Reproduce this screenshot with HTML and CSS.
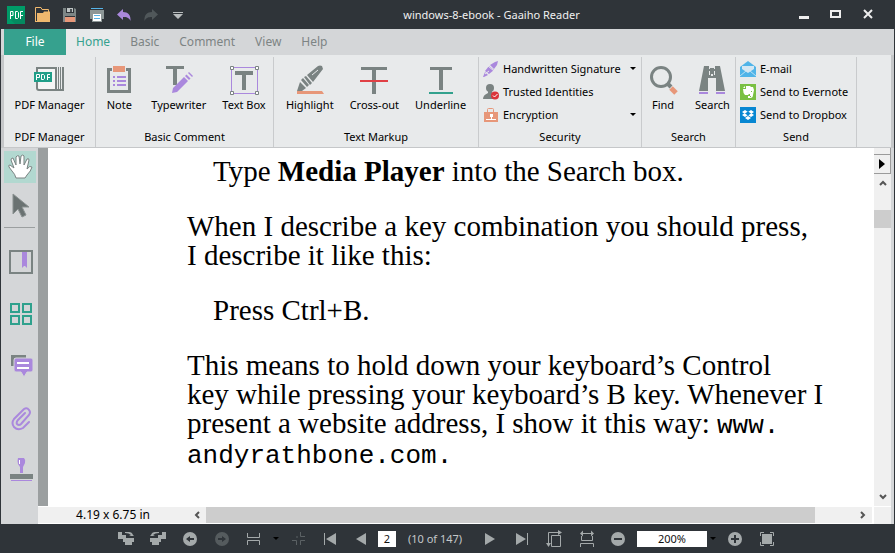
FILE: index.html
```html
<!DOCTYPE html>
<html lang="en">
<head>
<meta charset="utf-8">
<title>windows-8-ebook - Gaaiho Reader</title>
<link rel="stylesheet" href="styles.css">
</head>
<body>
<div class="app">
  <header class="titlebar">
    <div class="quick">
      <button class="tool" aria-label="Application menu"><svg width="20" height="18" viewBox="0 0 20 18"><path fill="#009b68" d="M1 0h18v18H1z"/><path fill="#048a60" d="M19 9v9H9l-4-4z"/><path fill="none" stroke="#fff" d="M4.500 13V5.500h2.500v4H5M9.500 5.500h2l1 1v5l-1 1h-2zM14.500 13V5.500H17M15 9.500h2"/></svg></button>
      <button class="tool" aria-label="Open"><svg width="16" height="16" viewBox="0 0 16 16"><path fill="none" stroke="#f0b86e" d="M.5 15V.5H6l1 2h6.500V5"/><path fill="#f0b86e" d="M2 6h6l1-1.500h6V15H2zM0 14h15v1H0z"/></svg></button>
      <button class="tool" aria-label="Save"><svg width="16" height="16" viewBox="0 0 16 16"><path fill="#7d8686" d="M1 1h3v5h8V1l2 1v13h-1V9H3v6H1z"/><path fill="#bfc5c5" d="M5 1h6v4H5z"/><path fill="#4b5154" d="M8 2h2v3H8z"/><path fill="#e79779" d="M3 10h10v5H3z"/></svg></button>
      <button class="tool" aria-label="Print"><svg width="16" height="16" viewBox="0 0 16 16"><path fill="#56b4e8" d="M2 1h12v1H2z"/><path fill="#8d9797" d="M1 3h14v9h-2v3H3v-3H1z"/><path fill="#fff" d="M4 7h8v7H4z"/><path fill="#56b4e8" d="M5 8h6v1H5zm0 3h6v1H5z"/></svg></button>
      <button class="tool" aria-label="Undo"><svg width="14" height="12" viewBox="0 0 14 12"><path fill="#aa88dd" d="M0 5.500 6 0v3c5 0 8 3 7.500 9C12 8.500 9.500 8 6 8v3z"/></svg></button>
      <button class="tool" aria-label="Redo"><svg width="14" height="12" viewBox="0 0 14 12"><path fill="#50575a" d="M14 5.500 8 0v3C3 3 0 6 .5 12 2 8.500 4.500 8 8 8v3z"/></svg></button>
      <button class="tool" aria-label="Customize toolbar"><svg width="10" height="8" viewBox="0 0 10 8"><path fill="#b9bdbe" d="M0 1h10v1H0zm0 2h10L5 8z"/></svg></button>
    </div>
    <h1 class="title">windows-8-ebook - Gaaiho Reader</h1>
    <div class="window-buttons">
      <button class="win" aria-label="Minimize"><svg width="12" height="12"><path fill="#eee" d="M1 7h10v3H1z"/></svg></button>
      <button class="win" aria-label="Maximize"><svg width="12" height="12"><path fill="#eee" fill-rule="evenodd" d="M0 1h11v8H0zm2 2v4h7V3z"/></svg></button>
      <button class="win" aria-label="Close"><svg width="12" height="12"><path fill="none" stroke="#eee" stroke-width="2" d="m2 1 8 8m0-8-8 8"/></svg></button>
    </div>
  </header>

  <nav class="tabs">
    <button class="tab file">File</button>
    <button class="tab active">Home</button>
    <button class="tab">Basic</button>
    <button class="tab">Comment</button>
    <button class="tab">View</button>
    <button class="tab">Help</button>
  </nav>

  <section class="ribbon">
    <div class="group">
      <div class="group-body">
        <button class="big"><svg width="32" height="30" viewBox="0 0 32 30"><path fill="#f4f5f5" stroke="#7a8382" stroke-width="2" d="M4 3h19v22H6q-2 0-2-2z"/><path fill="#7a8382" d="M25 2h1v23h-1zm2 0h1v23h-1zm2 0h2v24h-7v-2h5z"/><path fill="#1f9e88" d="M1 7h18v10H1z"/><path fill="none" stroke="#fff" d="M3.500 15V9.500H6.500v3H4M8.500 9.500h2l1 1v3l-1 1h-2zM14.500 15V9.500H17M15 12.500h2"/></svg>PDF Manager</button>
      </div>
      <h2 class="group-name">PDF Manager</h2>
    </div>
    <div class="group">
      <div class="group-body">
        <button class="big"><svg width="32" height="30" viewBox="0 0 32 30"><path fill="none" stroke="#7a8382" stroke-width="3" d="M5.500 4.500h21v22h-21z"/><path fill="#e8eaeb" d="M9 0h14v8H9z"/><path fill="#e79779" d="M10 1h12v6H10z"/><path fill="#aa88dd" d="M10 11h2v2h-2zm4 0h9v2h-9zm-4 4h2v2h-2zm4 0h9v2h-9zm-4 4h2v2h-2zm4 0h9v2h-9z"/></svg>Note</button>
        <button class="big"><svg width="32" height="30" viewBox="0 0 32 30"><path fill="#7a8382" d="M3 1h18v3h-7v16h-4V4H3z"/><path fill="#aa88dd" d="m9 28 1-5L21 12l4 4-11 11zM22 11l1.500-1.500 4 4L26 15zM25 8l1-1 4 4-1 1z"/></svg>Typewriter</button>
        <button class="big"><svg width="32" height="30" viewBox="0 0 32 30"><path fill="none" stroke="#aa88dd" d="M3.500 2.500h26v26h-26z"/><path fill="#fff" stroke="#7a8382" d="M2.500 1.500h3v3h-3zm25 0h3v3h-3zm-25 25h3v3h-3zm25 0h3v3h-3z"/><path fill="#7a8382" d="M7 6h18v4h-7v15h-4V10H7z"/></svg>Text Box</button>
      </div>
      <h2 class="group-name">Basic Comment</h2>
    </div>
    <div class="group">
      <div class="group-body">
        <button class="big"><svg width="32" height="30" viewBox="0 0 32 30"><path fill="#7a8382" d="m13 10 11-9q2-1 4 0l1 3-10 13zM10 12l2-1 6 7-2 2zM7 15l2-2 6 7-2 2z"/><path fill="#7a8382" d="m3 26 3-9 6 6-4 3z"/><path stroke="#e8eaeb" d="m18 10 6-5"/><path fill="#e79779" d="M3 26h25l2 3H3z"/></svg>Highlight</button>
        <button class="big"><svg width="32" height="30" viewBox="0 0 32 30"><path fill="#7a8382" d="M3 2h26v3H18v24h-4V5H3z"/><path fill="#e04045" d="M2 15h28v2H2z"/></svg>Cross-out</button>
        <button class="big"><svg width="32" height="30" viewBox="0 0 32 30"><path fill="#7a8382" d="M5 2h22v3h-9v20h-4V5H5z"/><path fill="#32a18d" d="M4 27h24v2H4z"/></svg>Underline</button>
      </div>
      <h2 class="group-name">Text Markup</h2>
    </div>
    <div class="group">
      <div class="group-list">
        <button class="row"><svg width="16" height="16" viewBox="0 0 16 16"><path fill="#aa88dd" d="m0 16 2-5 3 3-4 2zM2 10l4-5 5 4-5 4zM7 4l5-3 3-1-1 4-3 4z"/><path stroke="#e8eaeb" fill="none" d="m2 13 4-3M5 5l6 5"/></svg><span>Handwritten Signature</span><i class="caret"></i></button>
        <button class="row"><svg width="16" height="16" viewBox="0 0 16 16"><circle cx="7" cy="4" r="4" fill="#7a8382"/><path fill="#7a8382" d="M0 15q0-4 5-6V7h4v2q5 2 5 6z"/><circle cx="12" cy="11.500" r="4" fill="#db343b"/><path stroke="#fff" fill="none" d="m10 11.500 1.500 1.500 3-3"/></svg><span>Trusted Identities</span></button>
        <button class="row"><svg width="16" height="16" viewBox="0 0 16 16"><path fill="#e79779" d="M1 5h14v10H1z"/><path fill="none" stroke="#e79779" d="M4.500 5V2.500q0-1 1-1h4q1 0 1 1V5"/><path fill="#fff" d="M7 7h3v3H9v2H8v-2H7zM3 12h10v1H3z"/></svg><span>Encryption</span><i class="caret"></i></button>
      </div>
      <h2 class="group-name">Security</h2>
    </div>
    <div class="group">
      <div class="group-body">
        <button class="big"><svg width="32" height="30" viewBox="0 0 32 30"><circle cx="14" cy="12" r="9.500" fill="none" stroke="#7a8382" stroke-width="3"/><path stroke="#7a8382" stroke-width="4" d="m20 18 4 4"/><path stroke="#e79779" stroke-width="5" d="m24 23 5 5"/></svg>Find</button>
        <button class="big"><svg width="32" height="30" viewBox="0 0 32 30"><path fill="#7a8382" d="M8 1h5v3h1V3h4v1h1V1h5l5 25h-9V13h-8v13H3z"/><path fill="#e8eaeb" d="M13 6h1v4h-1zm5 0h1v4h-1zM15 9h2v2h-2z"/><path fill="#aa88dd" d="M3 27h9v2H3zm17 0h9v2h-9z"/></svg>Search</button>
      </div>
      <h2 class="group-name">Search</h2>
    </div>
    <div class="group">
      <div class="group-list">
        <button class="row"><svg width="16" height="16" viewBox="0 0 16 16"><path fill="#50b4e8" d="m0 6 8-6 8 6v10H0z"/><path fill="#d5e7f2" d="M2 5h12v3l-6 4-6-4z"/><path stroke="#b9dff4" fill="none" d="m0 15 6-5m10 5-6-5"/></svg><span>E-mail</span></button>
        <button class="row"><svg width="16" height="16" viewBox="0 0 16 16"><path fill="#7ac043" d="M0 0h16v16H0z"/><path fill="#fff" d="M3 5h3V2h4l1 1h2l1 3-1 5q0 3-3 3H8v-2h2v-2H9l-1 1H5Q3 9 3 5z"/><path fill="#fff" d="m3 4 2-2v2z"/><path fill="#7ac043" d="M11 7h1v1h-1zM10 12h1v1h-1z"/></svg><span>Send to Evernote</span></button>
        <button class="row"><svg width="16" height="16" viewBox="0 0 16 16"><path fill="#0787d2" d="M0 0h16v16H0z"/><path fill="#fff" d="m2 5 3-2 3 2-3 2zm6 0 3-2 3 2-3 2zM2 8l3-2 3 2-3 2zm6 0 3-2 3 2-3 2zM5 11l3-2 3 2-3 2z"/><path fill="#0787d2" d="m5 6.500 3-2 3 2-3 2z"/></svg><span>Send to Dropbox</span></button>
      </div>
      <h2 class="group-name">Send</h2>
    </div>
  </section>

  <main class="workspace">
    <aside class="sidebar">
      <button class="mode selected" aria-label="Hand tool"><svg width="26" height="26" viewBox="0 0 26 26"><path fill="#fff" stroke="#7a8382" stroke-linejoin="round" d="M9 24q-1-4-4-7l-3-4q-1-2 1-2l4 3L4 6q0-2 2-2l3 7V3q1-2 3-1l1 8 1-8q2-2 3 0v9l3-6q2-1 2 1l-2 9q3-4 5-2-1 4-5 8l-2 3z"/></svg></button>
      <button class="mode" aria-label="Select tool"><svg width="26" height="26" viewBox="0 0 26 26"><path fill="#6a7272" stroke="#8a9191" d="m6 2 16 13h-7l4 8-4 2-4-8-5 5z"/></svg></button>
      <hr class="divider">
      <button class="panel" aria-label="Bookmarks"><svg width="26" height="26" viewBox="0 0 26 26"><path fill="none" stroke="#7a8382" stroke-width="2" d="M3 2h22v22H3z"/><path fill="#aa88dd" d="M15 3h5v16l-2-2-1 0-2 2z"/></svg></button>
      <button class="panel" aria-label="Thumbnails"><svg width="26" height="26" viewBox="0 0 26 26"><path fill="none" stroke="#2fa18d" stroke-width="2" d="M4 3h8v8H4zm12 0h8v8h-8zM4 15h8v8H4zm12 0h8v8h-8z"/></svg></button>
      <button class="panel" aria-label="Comments"><svg width="26" height="26" viewBox="0 0 26 26"><path fill="none" stroke="#7a8382" stroke-width="3" d="M5.500 13V3.500H19"/><path fill="#aa88dd" stroke="#d4d6d8" d="M9 5h15q2 0 2 2v10q0 2-2 2h-4l-3 5-3-5H9q-2 0-2-2V7q0-2 2-2z"/><path fill="#fff" d="M10 9h12v2H10zm0 5h12v2H10z"/></svg></button>
      <button class="panel" aria-label="Attachments"><svg width="26" height="26" viewBox="0 0 26 26"><path fill="none" stroke="#aa88dd" stroke-width="2" stroke-linecap="round" d="m22 17-6 6q-5 3-9-1-3-4 0-8L17 4q3-2 5 1 2 2 0 5l-8 9q-2 2-4 0-1-2 1-4l7-7"/></svg></button>
      <button class="panel" aria-label="Stamps"><svg width="26" height="26" viewBox="0 0 26 26"><path fill="#aa88dd" d="M11 1h6q2 2 1 5l-2 4v6h-3v-6l-2-3q-1-3 0-6z"/><path fill="#fff" d="M12 3h1v4h-1z"/><path fill="#7a8382" d="M3 17h23v5H3z"/><path fill="#aa88dd" d="M4 23h21v1H4z"/></svg></button>
    </aside>
    <div class="viewer">
      <article class="page">
        <p class="indent">Type <b>Media Player</b> into the Search box.</p>
        <p>When I describe a key combination you should press,<br>I describe it like this:</p>
        <p class="indent">Press Ctrl+B.</p>
        <p>This means to hold down your keyboard’s Control<br>key while pressing your keyboard’s B key. Whenever I<br>present a website address, I show it this way: <code>www.<br>andyrathbone.com.</code></p>
      </article>
      <div class="vscroll">
        <div class="grip"></div>
        <button class="expand" aria-label="Show panel"><svg width="6" height="10"><path d="m0 0 6 5-6 5z"/></svg></button>
        <button class="step" aria-label="Scroll up"><svg width="8" height="6"><path fill="none" stroke="#555" stroke-width="2" d="m1 5 3-3 3 3"/></svg></button>
        <div class="vtrack"><div class="vthumb"></div></div>
        <button class="step" aria-label="Scroll down"><svg width="8" height="6"><path fill="none" stroke="#555" stroke-width="2" d="m1 1 3 3 3-3"/></svg></button>
      </div>
      <div class="hscroll">
        <span class="dimensions">4.19 x 6.75 in</span>
        <button class="step" aria-label="Scroll left"><svg width="6" height="8"><path fill="none" stroke="#555" stroke-width="2" d="M5 1 2 4l3 3"/></svg></button>
        <div class="htrack"><div class="hthumb"></div></div>
        <button class="step" aria-label="Scroll right"><svg width="6" height="8"><path fill="none" stroke="#555" stroke-width="2" d="m1 1 3 3-3 3"/></svg></button>
      </div>
      <div class="corner"></div>
    </div>
  </main>

  <footer class="status">
    <button class="nav" aria-label="Rotate left"><svg width="16" height="16" viewBox="0 0 16 16"><path fill="#a4a9aa" d="M0 1h4v3h4v3h8v4h-2v3h-7v-3H5V8H0zM7 1h4q3 0 4 3l1 1h-5l2-1q-2-2-6-2z"/></svg></button>
    <button class="nav" aria-label="Rotate right"><svg width="16" height="16" viewBox="0 0 16 16"><path fill="#a4a9aa" d="M16 1h-4v3H8v3H0v4h2v3h7v-3h2V8h5zM9 1H5Q2 1 1 4L0 5h5L3 4q2-2 6-2z"/></svg></button>
    <button class="nav" aria-label="Previous view"><svg width="16" height="16" viewBox="0 0 16 16"><circle cx="8" cy="8" r="7" fill="#a4a9aa"/><path fill="#2f3439" d="m4 8 4-3v2h4v2H8v2z"/></svg></button>
    <button class="nav" aria-label="Next view"><svg width="16" height="16" viewBox="0 0 16 16"><circle cx="8" cy="8" r="7" fill="#555b5e"/><path fill="#2f3439" d="m12 8-4-3v2H4v2h4v2z"/></svg></button>
    <button class="nav" aria-label="Page layout"><svg width="16" height="16" viewBox="0 0 16 16"><path fill="none" stroke="#a4a9aa" d="M1.500 2v4.500h12V2M1.500 14v-4.500h12V14"/></svg></button>
    <button class="drop" aria-label="Page layout options"><i class="caret"></i></button>
    <button class="nav" aria-label="Fit content"><svg width="16" height="16" viewBox="0 0 16 16"><path fill="none" stroke="#5b6164" d="M10.500 1v4.500H15M7 5v2M2 9.500h4.500V14M10.500 14v-4.500H15"/></svg></button>
    <button class="nav" aria-label="First page"><svg width="16" height="16" viewBox="0 0 16 16"><path fill="#a4a9aa" d="M2 2h1v12H2zm12 0v12L4 8z"/></svg></button>
    <button class="nav" aria-label="Previous page"><svg width="16" height="16" viewBox="0 0 16 16"><path fill="#a4a9aa" d="M12 2v12L2 8z"/></svg></button>
    <input class="field page-number" aria-label="Page" value="2">
    <span class="count">(10 of 147)</span>
    <button class="nav" aria-label="Next page"><svg width="16" height="16" viewBox="0 0 16 16"><path fill="#a4a9aa" d="M3 2v12l10-6z"/></svg></button>
    <button class="nav" aria-label="Last page"><svg width="16" height="16" viewBox="0 0 16 16"><path fill="#a4a9aa" d="M2 2v12l10-6zM13 2h1v12h-1z"/></svg></button>
    <button class="nav" aria-label="Fit page"><svg width="18" height="18" viewBox="0 0 18 18"><path fill="none" stroke="#a4a9aa" d="M3.500 14V2.500H15M6.500 5.500h9v11h-9z"/><path fill="#a4a9aa" d="m1 13 5 0-2.500 4zM13 0v5l4-2.500z"/></svg></button>
    <button class="nav" aria-label="Fit width"><svg width="18" height="18" viewBox="0 0 18 18"><path fill="none" stroke="#a4a9aa" d="M5 3.500h9M4.500 6v4.500h11V6M3.500 17v-3.500h13V17"/><path fill="#a4a9aa" d="m3 3.500 3-3v6zM17 3.500l-3-3v6z"/></svg></button>
    <button class="nav" aria-label="Zoom out"><svg width="16" height="16" viewBox="0 0 16 16"><circle cx="8" cy="8" r="7" fill="#a4a9aa"/><path fill="#2f3439" d="M4 7h8v2H4z"/></svg></button>
    <input class="field zoom" aria-label="Zoom" value="200%">
    <button class="drop" aria-label="Zoom options"><i class="caret"></i></button>
    <button class="nav" aria-label="Zoom in"><svg width="16" height="16" viewBox="0 0 16 16"><circle cx="8" cy="8" r="7" fill="#a4a9aa"/><path fill="#2f3439" d="M4 7h3V4h2v3h3v2H9v3H7V9H4z"/></svg></button>
    <button class="nav" aria-label="Full screen"><svg width="16" height="16" viewBox="0 0 16 16"><path fill="#a4a9aa" d="M3 3h10v10H3z"/><path fill="none" stroke="#a4a9aa" d="M1.500 5V1.500H5M11 1.500h3.500V5M14.500 11v3.500H11M5 14.500H1.500V11"/></svg></button>
  </footer>
</div>
</body>
</html>
```
FILE: styles.css
```css
* { box-sizing: border-box; }
body {
  margin: 0;
  font: 11px/16px "Noto Sans", "Open Sans", sans-serif;
  color: #000;
}
button {
  display: flex;
  align-items: center;
  justify-content: center;
  margin: 0;
  padding: 0;
  border: 0;
  background: none;
  font: inherit;
  color: inherit;
}
svg { display: block; flex: none; }
h1, h2, p { margin: 0; font-size: inherit; font-weight: normal; }

.app {
  display: grid;
  grid-template-rows: 29px 26px 93px 1fr 29px;
  height: 100vh;
  padding: 0 1px;
  background: #2f3439;
}

/* Title bar */
.titlebar {
  display: grid;
  grid-template-columns: 1fr auto 1fr;
  align-items: center;
  color: #f0f0f0;
}
.quick { display: flex; padding-left: 1px; }
.tool { width: 27px; height: 29px; }
.title { padding-left: 88px; }
.window-buttons { display: flex; justify-content: flex-end; padding-right: 10px; }
.win { width: 32px; height: 29px; }

/* Ribbon tabs */
.tabs {
  display: flex;
  padding-left: 3px;
  background: #d4d6d8;
  color: #7d8484;
  font-size: 12px;
}
.tab { padding: 0 10px; }
.tab.file { width: 62px; background: #36a18e; color: #fff; }
.tab.active { background: #e8eaeb; color: #36a18e; }

/* Ribbon */
.ribbon {
  display: grid;
  grid-template-columns: 92px 178px 205px 163px 94px 121px;
  padding: 2px 3px 1px;
  background: linear-gradient(#e8eaeb, #e8eaeb) 3px 0 / calc(100% - 6px) 92px no-repeat #c5c7c9;
}
.group {
  display: flex;
  flex-direction: column;
  border-right: 1px solid #c9cbcd;
}
.group-body {
  display: flex;
  flex: 1;
  justify-content: center;
  gap: 16px;
  padding-top: 8px;
}
.big { flex-direction: column; justify-content: flex-start; gap: 2px; white-space: nowrap; }
.group-list { flex: 1; padding: 0 5px 0 4px; }
.row { width: 100%; height: 23px; justify-content: flex-start; gap: 4px; white-space: nowrap; }
.row span { flex: 1; text-align: left; }
.caret {
  border: 3px solid transparent;
  border-top-color: #000;
  border-bottom: 0;
}
.group-name { height: 18px; text-align: center; }

/* Workspace */
.workspace {
  display: grid;
  grid-template-columns: 37px 1fr;
  min-height: 0;
  background: #d4d6d8;
}
.sidebar { padding: 3px; }
.mode { width: 32px; height: 32px; }
.mode + .mode { margin-top: 6px; }
.selected { background: #b2d8d0; }
.divider { margin: 6px 0 8px; border: 0; border-top: 1px solid #9b9fa0; }
.panel { width: 32px; height: 52px; }
.viewer {
  display: grid;
  grid-template: 1fr 18px / 1fr 18px;
  min-height: 0;
  margin-right: 3px;
}
.page {
  overflow: hidden;
  padding: 9px 0 0 139px;
  border-left: 10px solid #9b9fa0;
  background: #fff;
  color: #000;
  font: 29px/29px "Liberation Serif", serif;
  white-space: nowrap;
}
.page p { margin-bottom: 26px; }
.page .indent { padding-left: 26px; }
.page code { font: 26px/1 "Liberation Mono", monospace; }

.vscroll {
  display: flex;
  flex-direction: column;
  background: #f0f0f0;
  border-left: 1px solid #fff;
}
.grip { height: 7px; border-bottom: 1px solid #9b9b9b; border-right: 1px solid #9b9b9b; }
.expand { height: 19px; border: 1px solid #9b9b9b; border-width: 0 1px 1px 0; }
.vscroll .step { height: 18px; }
.vtrack { flex: 1; padding-top: 18px; }
.vthumb { height: 18px; background: #cdcdcd; }
.hscroll { display: flex; border: 1px solid #fff; border-left: 0; background: #f0f0f0; }
.dimensions { width: 150px; text-align: center; font-size: 12px; }
.hscroll .step { width: 18px; }
.htrack { flex: 1; }
.hthumb { width: 94%; height: 100%; background: #cdcdcd; }
.corner { border: 1px solid #fff; border-width: 1px 0 0 1px; background: #f0f0f0; }

/* Status bar */
.status { display: flex; align-items: center; padding-left: 109px; color: #c4c8c9; }
.nav { width: 32px; height: 26px; }
.drop { width: 12px; height: 26px; }
.field {
  height: 16px;
  padding: 0;
  border: 0;
  background: #fff;
  color: #111;
  font: inherit;
  text-align: center;
}
.page-number { width: 18px; }
.count { width: 78px; text-align: center; white-space: nowrap; }
.zoom { width: 70px; margin-left: 3px; }
```
